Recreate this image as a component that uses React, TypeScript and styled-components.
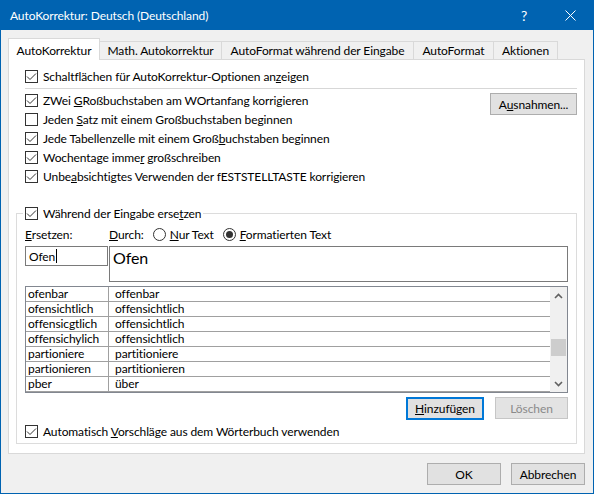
import React from "react";
import styled, { createGlobalStyle } from "styled-components";

const GlobalStyle = createGlobalStyle`
  * { box-sizing: border-box; }
  html, body { margin: 0; padding: 0; background: #ffffff; }
  body {
    font-family: "Segoe UI", Lato, "Noto Sans", sans-serif;
    font-size: 12px;
    letter-spacing: -0.1px;
    color: #000000;
  }
`;

const entries = [
  ["ofenbar", "offenbar"],
  ["ofensichtlich", "offensichtlich"],
  ["offensicgtlich", "offensichtlich"],
  ["offensichylich", "offensichtlich"],
  ["partioniere", "partitioniere"],
  ["partionieren", "partitionieren"],
  ["pber", "über"],
];

const Window = styled.div`
  width: 594px;
  height: 494px;
  border: 1px solid #0063b1;
  border-top: none;
  background: #f0f0f0;
  display: flex;
  flex-direction: column;
`;

const TitleBar = styled.div`
  height: 30px;
  flex: none;
  background: #0063b1;
  color: #ffffff;
  display: flex;
  align-items: center;
  padding-left: 9px;
`;

const TitleText = styled.div`
  flex: 1;
  font-size: 12px;
`;

const CaptionButton = styled.div`
  width: 46px;
  height: 30px;
  display: flex;
  align-items: center;
  justify-content: center;
  font-size: 14px;
`;

const Body = styled.div`
  flex: 1;
  display: flex;
  flex-direction: column;
  padding: 8px 8px 8px 7px;
`;

const TabStrip = styled.div`
  height: 22px;
  display: flex;
  align-items: flex-end;
  position: relative;
  z-index: 1;
`;

const Tab = styled.div<{ $w: number; $active?: boolean }>`
  width: ${(p) => p.$w}px;
  height: ${(p) => (p.$active ? 22 : 19)}px;
  margin-left: ${(p) => (p.$active ? 0 : -1)}px;
  padding-top: ${(p) => (p.$active ? 1 : 0)}px;
  background: ${(p) => (p.$active ? "#ffffff" : "#f0f0f0")};
  border: 1px solid #d9d9d9;
  border-bottom: ${(p) => (p.$active ? "none" : "1px solid #d9d9d9")};
  display: flex;
  align-items: center;
  justify-content: center;
  white-space: nowrap;
  position: relative;
  z-index: ${(p) => (p.$active ? 2 : 1)};
`;

const Panel = styled.div`
  flex: 1;
  margin-top: -1px;
  background: #ffffff;
  border: 1px solid #d9d9d9;
  padding: 7px 7px 8px 7px;
  display: flex;
  flex-direction: column;
`;

const TopSection = styled.div`
  padding-left: 9px;
  display: flex;
  flex-direction: column;
`;

const Separator = styled.div`
  height: 1px;
  background: #d7d7d7;
  margin: 2px 0 2px;
`;

const OptionsBlock = styled.div`
  display: flex;
  align-items: flex-start;
  justify-content: space-between;
`;

const OptionsList = styled.div`
  display: flex;
  flex-direction: column;
`;

const Row = styled.label`
  height: 19px;
  display: flex;
  align-items: center;
  gap: 5px;
  white-space: nowrap;
`;

const Box = styled.span`
  width: 13px;
  height: 13px;
  flex: none;
  border: 1px solid #333333;
  background: #ffffff;
  display: flex;
  align-items: center;
  justify-content: center;
`;

const RadioCircle = styled.span<{ $checked?: boolean }>`
  width: 13px;
  height: 13px;
  flex: none;
  border: 1px solid #333333;
  border-radius: 50%;
  background: #ffffff;
  display: flex;
  align-items: center;
  justify-content: center;

  &::after {
    content: "";
    width: 7px;
    height: 7px;
    border-radius: 50%;
    background: ${(p) => (p.$checked ? "#333333" : "transparent")};
  }
`;

const Button = styled.div<{ $w: number; $default?: boolean; $disabled?: boolean }>`
  width: ${(p) => p.$w}px;
  height: ${(p) => (p.$default ? 23 : 22)}px;
  flex: none;
  background: ${(p) => (p.$disabled ? "#e3e3e3" : "#e1e1e1")};
  border: ${(p) =>
    p.$default ? "2px solid #0078d7" : p.$disabled ? "1px solid #c6c6c6" : "1px solid #adadad"};
  color: ${(p) => (p.$disabled ? "#8a8a8a" : "#000000")};
  display: flex;
  align-items: center;
  justify-content: center;
  white-space: nowrap;
`;

const ExceptionsButton = styled(Button)`
  margin-top: 2px;
`;

const Group = styled.fieldset`
  margin: 18px 0 0 0;
  border: 1px solid #dcdcdc;
  padding: 0 8px 2px 8px;
  display: flex;
  flex-direction: column;
  min-width: 0;
`;

const Legend = styled.legend`
  padding: 0 2px;
  margin-left: -2px;
`;

const LabelsRow = styled.div`
  height: 19px;
  margin-top: 2px;
  display: flex;
  align-items: center;
  white-space: nowrap;
`;

const FieldLabel = styled.span<{ $w?: number }>`
  width: ${(p) => (p.$w ? `${p.$w}px` : "auto")};
  flex: none;
`;

const RadioOption = styled.span`
  display: flex;
  align-items: center;
  gap: 4px;
  margin-left: 9px;
`;

const InputsRow = styled.div`
  margin-top: 2px;
  display: flex;
  align-items: flex-start;
  gap: 1px;
`;

const ReplaceInput = styled.div`
  width: 83px;
  height: 20px;
  border: 1px solid #7a7a7a;
  background: #ffffff;
  padding-left: 3px;
  display: flex;
  align-items: center;
`;

const Caret = styled.span`
  width: 1px;
  height: 14px;
  background: #000000;
  margin-left: 1px;
`;

const WithInput = styled.div`
  flex: 1;
  height: 36px;
  border: 1px solid #7a7a7a;
  background: #ffffff;
  padding: 1px 3px;
  font-size: 16px;
  line-height: 20px;
`;

const Table = styled.div`
  margin-top: 4px;
  height: 107px;
  border: 1px solid #828790;
  background: #ffffff;
  display: flex;
`;

const TableRows = styled.div`
  flex: 1;
  display: flex;
  flex-direction: column;
`;

const TableRow = styled.div`
  height: 15px;
  flex: none;
  display: grid;
  grid-template-columns: 83px 1fr;
  border-bottom: 1px solid #a0a0a0;
  line-height: 14px;
`;

const Cell = styled.div<{ $first?: boolean }>`
  padding-left: ${(p) => (p.$first ? 2 : 6)}px;
  border-right: ${(p) => (p.$first ? "1px solid #a0a0a0" : "none")};
  white-space: nowrap;
  overflow: hidden;
`;

const ScrollBar = styled.div`
  width: 17px;
  flex: none;
  background: #f0f0f0;
  display: flex;
  flex-direction: column;
`;

const ScrollArrow = styled.div`
  height: 17px;
  flex: none;
  display: flex;
  align-items: center;
  justify-content: center;
`;

const ScrollThumb = styled.div<{ $offset: number }>`
  height: 17px;
  margin: ${(p) => p.$offset}px 1px 0 1px;
  background: #cdcdcd;
`;

const ScrollTrack = styled.div`
  flex: 1;
`;

const ActionsRow = styled.div`
  margin-top: 4px;
  display: flex;
  justify-content: flex-end;
  gap: 11px;
`;

const AutoRow = styled(Row)`
  margin-top: 2px;
`;

const FooterRow = styled.div`
  margin-top: 9px;
  display: flex;
  justify-content: flex-end;
  gap: 10px;
`;

const CheckMark = () => (
  <svg width="11" height="11" viewBox="0 0 11 11">
    <polyline points="1,5.5 4,8.5 10,2.5" fill="none" stroke="#333333" strokeWidth="1" />
  </svg>
);

const Check = ({ checked, children }: { checked?: boolean; children: React.ReactNode }) => (
  <Row>
    <Box>{checked && <CheckMark />}</Box>
    <span>{children}</span>
  </Row>
);

const Chevron = ({ down }: { down?: boolean }) => (
  <svg width="9" height="6" viewBox="0 0 9 6">
    <polyline
      points={down ? "1,1 4.5,4.5 8,1" : "1,5 4.5,1.5 8,5"}
      fill="none"
      stroke="#606060"
      strokeWidth="1.6"
    />
  </svg>
);

const App = () => {
  return (
    <>
      <GlobalStyle />
      <Window>
        <TitleBar>
          <TitleText>AutoKorrektur: Deutsch (Deutschland)</TitleText>
          <CaptionButton>?</CaptionButton>
          <CaptionButton>
            <svg width="11" height="11" viewBox="0 0 11 11">
              <path d="M0.5 0.5 L10.5 10.5 M10.5 0.5 L0.5 10.5" stroke="#ffffff" strokeWidth="1" />
            </svg>
          </CaptionButton>
        </TitleBar>

        <Body>
          <TabStrip>
            <Tab $w={92} $active>AutoKorrektur</Tab>
            <Tab $w={123}>Math. Autokorrektur</Tab>
            <Tab $w={193}>AutoFormat während der Eingabe</Tab>
            <Tab $w={81}>AutoFormat</Tab>
            <Tab $w={65}>Aktionen</Tab>
          </TabStrip>

          <Panel>
            <TopSection>
              <Check checked>
                Schaltflächen für AutoKorrektur-Optionen an<u>z</u>eigen
              </Check>
              <Separator />
              <OptionsBlock>
                <OptionsList>
                  <Check checked>
                    ZWei <u>G</u>Roßbuchstaben am WOrtanfang korrigieren
                  </Check>
                  <Check>
                    Jeden <u>S</u>atz mit einem Großbuchstaben beginnen
                  </Check>
                  <Check checked>
                    Jede Tabellenzelle mit einem Groß<u>b</u>uchstaben beginnen
                  </Check>
                  <Check checked>
                    Wochentage imme<u>r</u> großschreiben
                  </Check>
                  <Check checked>
                    Unbe<u>a</u>bsichtigtes Verwenden der fESTSTELLTASTE korrigieren
                  </Check>
                </OptionsList>
                <ExceptionsButton $w={87}>
                  A<u>u</u>snahmen...
                </ExceptionsButton>
              </OptionsBlock>
            </TopSection>

            <Group>
              <Legend>
                <Check checked>
                  Während der Eingabe erse<u>t</u>zen
                </Check>
              </Legend>

              <LabelsRow>
                <FieldLabel $w={84}>
                  <u>E</u>rsetzen:
                </FieldLabel>
                <FieldLabel>
                  <u>D</u>urch:
                </FieldLabel>
                <RadioOption>
                  <RadioCircle />
                  <span>
                    <u>N</u>ur Text
                  </span>
                </RadioOption>
                <RadioOption>
                  <RadioCircle $checked />
                  <span>
                    <u>F</u>ormatierten Text
                  </span>
                </RadioOption>
              </LabelsRow>

              <InputsRow>
                <ReplaceInput>
                  Ofen
                  <Caret />
                </ReplaceInput>
                <WithInput>Ofen</WithInput>
              </InputsRow>

              <Table>
                <TableRows>
                  {entries.map(([from, to]) => (
                    <TableRow key={from}>
                      <Cell $first>{from}</Cell>
                      <Cell>{to}</Cell>
                    </TableRow>
                  ))}
                </TableRows>
                <ScrollBar>
                  <ScrollArrow>
                    <Chevron />
                  </ScrollArrow>
                  <ScrollTrack>
                    <ScrollThumb $offset={35} />
                  </ScrollTrack>
                  <ScrollArrow>
                    <Chevron down />
                  </ScrollArrow>
                </ScrollBar>
              </Table>

              <ActionsRow>
                <Button $w={78} $default>
                  <u>H</u>inzufügen
                </Button>
                <Button $w={73} $disabled>
                  Löschen
                </Button>
              </ActionsRow>

              <AutoRow>
                <Box>
                  <CheckMark />
                </Box>
                <span>
                  Automatisch <u>V</u>orschläge aus dem Wörterbuch verwenden
                </span>
              </AutoRow>
            </Group>
          </Panel>

          <FooterRow>
            <Button $w={74}>OK</Button>
            <Button $w={74}>Abbrechen</Button>
          </FooterRow>
        </Body>
      </Window>
    </>
  );
};

export default App;
